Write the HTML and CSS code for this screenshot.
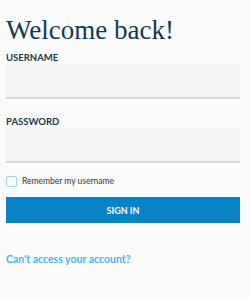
FILE: index.html
```html
<!DOCTYPE html>
<html>

<head>
    <meta charset="UTF-8">
    <title>Welcome back</title>
    <link rel="stylesheet" href="styles.css">
</head>

<body>
    <div class="login">
        <h1 class="title">Welcome back!</h1>
        <form class="form">
            <label class="field">
                <span class="label">USERNAME</span>
                <input class="input" type="text">
            </label>
            <label class="field">
                <span class="label">PASSWORD</span>
                <input class="input" type="password">
            </label>
            <label class="remember">
                <span class="box"></span>
                <span>Remember my username</span>
            </label>
            <button class="btn" type="button">SIGN IN</button>
        </form>
        <a class="help" href="#">Can't access your account?</a>
    </div>
</body>

</html>
```

FILE: styles.css
```css
* {
    padding: 0;
    margin: 0;
    box-sizing: border-box;
}

body {
    background: #fbfbfb;
    font-family: "Lato", "Open Sans", sans-serif;
}

.login {
    padding: 14px 10px 0 6px;
}

.title {
    font-family: "Liberation Serif", serif;
    font-weight: normal;
    font-size: 27px;
    line-height: 32px;
    color: #0f3a56;
}

.form {
    margin-top: 7px;
    display: flex;
    flex-direction: column;
}

.field {
    display: flex;
    flex-direction: column;
    gap: 1px;
    margin-bottom: 18px;
}

.label {
    font-size: 9.5px;
    font-weight: bold;
    color: #17384f;
    line-height: 10px;
}

.input {
    height: 35px;
    border: none;
    border-bottom: 2px solid #d4d4d4;
    background: #f3f3f3;
}

.remember {
    display: flex;
    align-items: center;
    gap: 5px;
    font-size: 8.5px;
    line-height: 11px;
    color: #2e3a44;
    margin-top: -5px;
}

.box {
    width: 11px;
    height: 11px;
    border: 1px solid #9fd4f4;
    border-radius: 2px;
    background: #fff;
}

.btn {
    margin-top: 10px;
    height: 26px;
    border: none;
    background: #0a83c6;
    color: #fff;
    font-family: "Lato", sans-serif;
    font-weight: bold;
    font-size: 9px;
}

.help {
    display: block;
    margin-top: 30px;
    font-size: 10.5px;
    line-height: 13px;
    font-weight: bold;
    color: #47b4f0;
    text-decoration: none;
}
```
